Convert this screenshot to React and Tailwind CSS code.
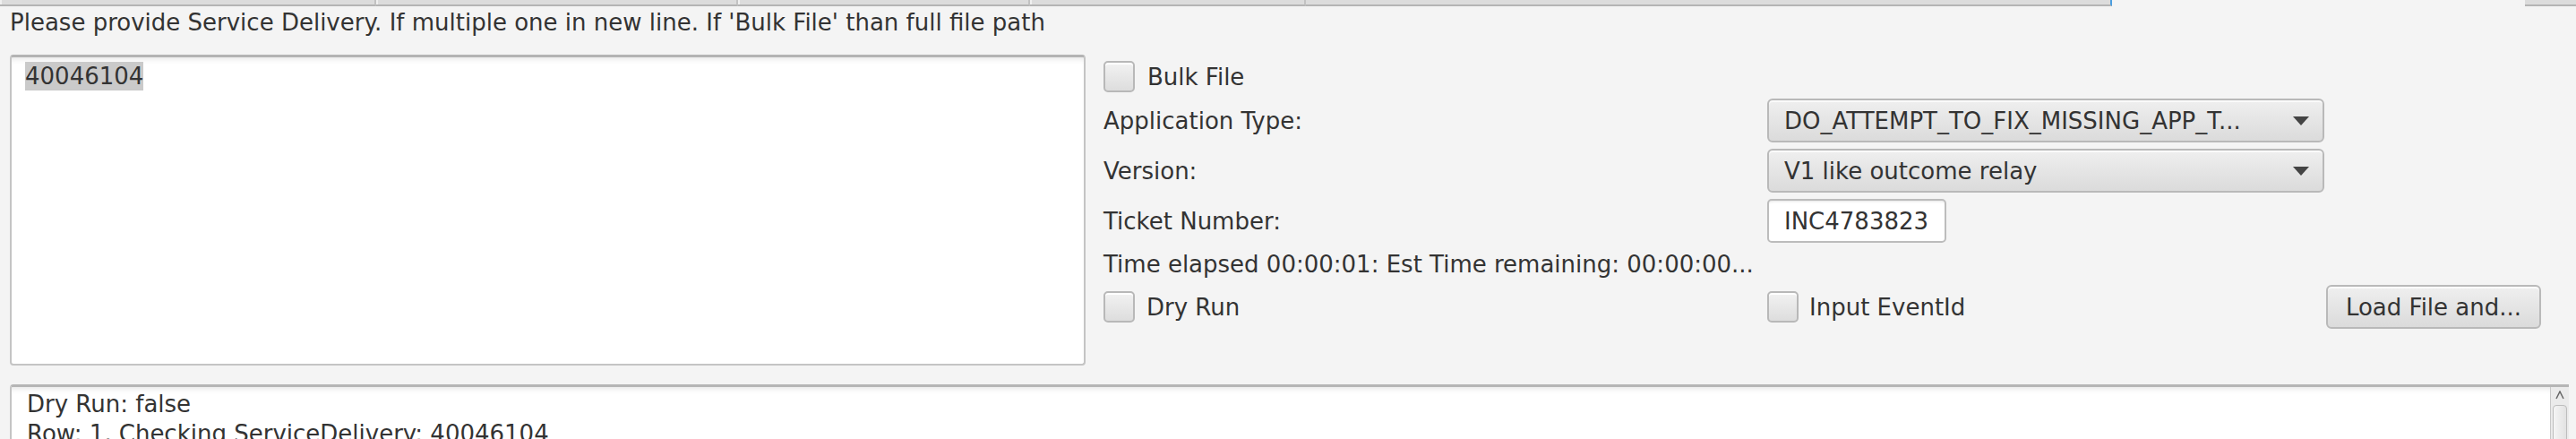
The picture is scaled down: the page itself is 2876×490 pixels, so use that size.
import React from "react";

function Checkbox() {
  return (
    <div className="w-[35px] h-[35px] shrink-0 rounded-[5px] border-2 border-[#b8b8b8] bg-gradient-to-b from-[#f2f2f2] to-[#dddddd] shadow-[inset_0_2px_0_#ffffff]" />
  );
}

function Combo({ text }) {
  return (
    <div className="w-[622px] h-[49px] flex items-center justify-between rounded-[6px] border-2 border-[#b9b9b9] bg-gradient-to-b from-[#efefef] to-[#dbdbdb] shadow-[inset_0_2px_0_#fafafa] pl-[17px] pr-[15px]">
      <span className="whitespace-nowrap">{text}</span>
      <svg width="18" height="10" viewBox="0 0 18 10" className="shrink-0">
        <polygon points="0,0 18,0 9,10" fill="#444444" />
      </svg>
    </div>
  );
}

export default function App() {
  const tab = "h-full bg-[#dcdcdc] border-b-2 border-[#b4b4b4] border-r-2 border-r-[#c2c2c2] shadow-[inset_2px_0_0_#f0f0f0]";
  return (
    <div className="w-[2876px] h-[490px] overflow-hidden bg-[#f4f4f4] text-[#333333] font-['DejaVu_Sans',sans-serif] text-[26px] leading-[30px]">
      {/* top header strip */}
      <div className="flex h-[7px]">
        <div className={`${tab} w-[420px]`} />
        <div className={`${tab} w-[404px]`} />
        <div className={`${tab} w-[326px]`} />
        <div className={`${tab} w-[308px]`} />
        <div className="h-full w-[900px] bg-[#dcdcdc] border-b-2 border-[#b4b4b4] border-r-2 border-r-[#4a9ee0]" />
        <div className="h-full w-[461px] bg-[#f4f4f4]" />
        <div className="h-full flex-1 bg-[#dcdcdc] border-b-2 border-[#b4b4b4]" />
      </div>

      <div className="pl-[11px] mt-[3px] whitespace-nowrap">
        Please provide Service Delivery. If multiple one in new line. If 'Bulk File' than full file path
      </div>

      <div className="flex mt-[21px] pl-[11px]">
        {/* input text area */}
        <div className="w-[1201px] h-[347px] shrink-0 bg-white rounded-[4px] border-2 border-[#c4c4c4] border-t-[3px] border-t-[#b3b3b3] shadow-[inset_0_6px_6px_-4px_#e6e6e6] pl-[15px] pt-[5px]">
          <span className="bg-[#cacaca] leading-[32px] inline-block">40046104</span>
        </div>

        {/* right panel */}
        <div className="ml-[20px] pt-[7px] grid grid-cols-[741px_624px_240px] grid-rows-[35px_49px_49px_49px_33px_49px] gap-y-[7px]">
          <div className="flex items-center gap-[14px] col-span-3">
            <Checkbox />
            <span>Bulk File</span>
          </div>

          <div className="flex items-center">Application Type:</div>
          <div className="col-span-2">
            <Combo text="DO_ATTEMPT_TO_FIX_MISSING_APP_T..." />
          </div>

          <div className="flex items-center">Version:</div>
          <div className="col-span-2">
            <Combo text="V1 like outcome relay" />
          </div>

          <div className="flex items-center">Ticket Number:</div>
          <div className="col-span-2">
            <div className="w-[200px] h-[49px] flex items-center bg-white rounded-[5px] border-2 border-[#bcbcbc] shadow-[inset_0_3px_3px_-2px_#e4e4e4] pl-[17px]">
              INC4783823
            </div>
          </div>

          <div className="col-span-3 flex items-center whitespace-nowrap">
            Time elapsed 00:00:01: Est Time remaining: 00:00:00...
          </div>

          <div className="flex items-center gap-[13px]">
            <Checkbox />
            <span>Dry Run</span>
          </div>
          <div className="flex items-center gap-[12px]">
            <Checkbox />
            <span>Input EventId</span>
          </div>
          <div>
            <div className="w-[240px] h-[49px] flex items-center justify-center rounded-[6px] border-2 border-[#b9b9b9] bg-gradient-to-b from-[#efefef] to-[#dbdbdb] shadow-[inset_0_2px_0_#fafafa] whitespace-nowrap">
              Load File and...
            </div>
          </div>
        </div>
      </div>

      {/* output text area */}
      <div className="mt-[21px] ml-[11px] w-[2857px] h-[120px] flex bg-white border-t-[3px] border-l-2 border-[#b5b5b5] border-l-[#c4c4c4] rounded-tl-[4px]">
        <div className="flex-1 pl-[17px] pt-[3px] leading-[33px] shadow-[inset_0_6px_6px_-4px_#e6e6e6]">
          <div>Dry Run: false</div>
          <div>Row: 1, Checking ServiceDelivery: 40046104</div>
        </div>
        <div className="w-[21px] h-full bg-[#ebebeb] border-l border-[#c8c8c8] flex flex-col items-center">
          <div className="h-[18px] w-full flex items-center justify-center">
            <svg width="10" height="10" viewBox="0 0 10 10">
              <polyline points="1,9 5,1 9,9" fill="none" stroke="#666666" strokeWidth="1.5" />
            </svg>
          </div>
          <div className="mt-[2px] w-[16px] flex-1 rounded-[4px] border border-[#bdbdbd] bg-gradient-to-r from-[#f5f5f5] to-[#e2e2e2]" />
        </div>
      </div>
    </div>
  );
}
